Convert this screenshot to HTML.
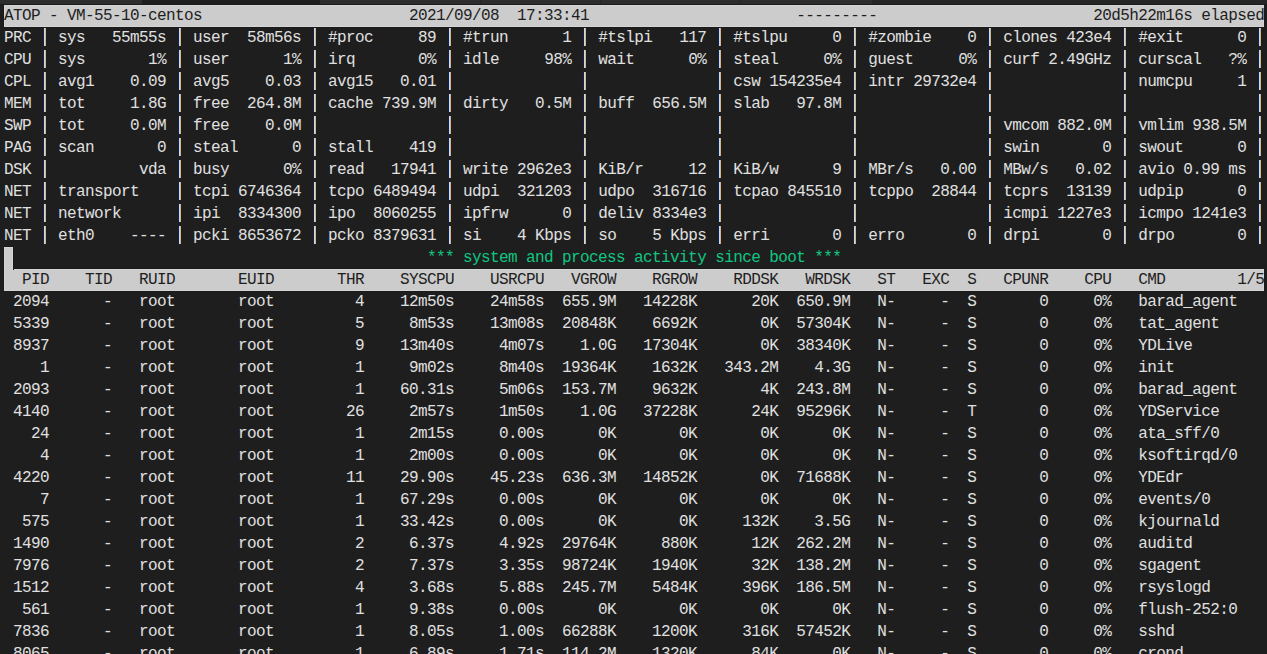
<!DOCTYPE html>
<html><head><meta charset="utf-8"><title>atop</title>
<style>
html,body{margin:0;padding:0;background:#1e1e1e;overflow:hidden;}
body{width:1267px;height:654px;position:relative;font-family:"Liberation Mono",monospace;}
.strip{position:absolute;left:0;top:0;width:1267px;height:4px;background:#2d2d2d;}
.strip i{position:absolute;top:0;height:4px;background:#1e1e1e;display:block;}
.strip i.s{background:#252526;}
.shadow{position:absolute;left:0;top:4px;width:1267px;height:1px;background:#1a1a1a;}
.term{position:absolute;left:4px;top:5px;width:1260px;color:#e0e0e0;font-size:16px;line-height:22px;letter-spacing:-0.6px;-webkit-text-stroke:0;}
.r{white-space:pre;height:22px;width:1260px;box-sizing:border-box;padding-top:1px;line-height:21px;}
.inv{background:#cccccc;color:#1e1e1e;-webkit-text-stroke:0;box-shadow:inset 0 1px 0 #d5d5d5,inset 0 -1px 0 #d5d5d5,inset 1px 0 0 #d5d5d5,inset -1px 0 0 #d5d5d5;position:relative;}
.inv::before{content:"";position:absolute;left:-1px;top:-1px;right:-1px;bottom:-1px;border:1px solid #1a1a1a;pointer-events:none;}
.g{color:#11c682;}
.cur{background:#cccccc;display:inline-block;width:9px;height:23px;vertical-align:top;margin-top:-1px;margin-bottom:-1px;position:relative;z-index:3;box-shadow:inset 1px 0 0 #d5d5d5,inset -1px 0 0 #d5d5d5,inset 0 1px 0 #d5d5d5,-1px 0 0 #1a1a1a,1px 0 0 #1a1a1a,0 -1px 0 #1a1a1a;}
.p{font-weight:normal;display:inline-block;width:9px;height:21px;vertical-align:top;position:relative;color:transparent;}
.p::after{content:"";position:absolute;left:3px;top:0;width:3px;height:18px;background:linear-gradient(to right,#1c1c52 0,#1c1c52 1px,#bbe1ea 1px,#bbe1ea 2px,#dab584 2px,#dab584 3px);}

</style></head><body>
<div class="strip"><i style="left:142px;width:178px"></i><i class="s" style="left:480px;width:1px"></i><i class="s" style="left:600px;width:1px"></i><i class="s" style="left:739px;width:1px"></i><i class="s" style="left:872px;width:395px"></i></div>
<div class="shadow"></div>
<div class="term">
<div class="r inv">ATOP - VM-55-10-centos                       2021/09/08  17:33:41                       ---------                        20d5h22m16s elapsed</div>
<div class="r">PRC <b class="p">|</b> sys   55m55s <b class="p">|</b> user  58m56s <b class="p">|</b> #proc     89 <b class="p">|</b> #trun      1 <b class="p">|</b> #tslpi   117 <b class="p">|</b> #tslpu     0 <b class="p">|</b> #zombie    0 <b class="p">|</b> clones 423e4 <b class="p">|</b> #exit      0 <b class="p">|</b></div>
<div class="r">CPU <b class="p">|</b> sys       1% <b class="p">|</b> user      1% <b class="p">|</b> irq       0% <b class="p">|</b> idle     98% <b class="p">|</b> wait      0% <b class="p">|</b> steal     0% <b class="p">|</b> guest     0% <b class="p">|</b> curf 2.49GHz <b class="p">|</b> curscal   ?% <b class="p">|</b></div>
<div class="r">CPL <b class="p">|</b> avg1    0.09 <b class="p">|</b> avg5    0.03 <b class="p">|</b> avg15   0.01 <b class="p">|</b>              <b class="p">|</b>              <b class="p">|</b> csw 154235e4 <b class="p">|</b> intr 29732e4 <b class="p">|</b>              <b class="p">|</b> numcpu     1 <b class="p">|</b></div>
<div class="r">MEM <b class="p">|</b> tot     1.8G <b class="p">|</b> free  264.8M <b class="p">|</b> cache 739.9M <b class="p">|</b> dirty   0.5M <b class="p">|</b> buff  656.5M <b class="p">|</b> slab   97.8M <b class="p">|</b>              <b class="p">|</b>              <b class="p">|</b>              <b class="p">|</b></div>
<div class="r">SWP <b class="p">|</b> tot     0.0M <b class="p">|</b> free    0.0M <b class="p">|</b>              <b class="p">|</b>              <b class="p">|</b>              <b class="p">|</b>              <b class="p">|</b>              <b class="p">|</b> vmcom 882.0M <b class="p">|</b> vmlim 938.5M <b class="p">|</b></div>
<div class="r">PAG <b class="p">|</b> scan       0 <b class="p">|</b> steal      0 <b class="p">|</b> stall    419 <b class="p">|</b>              <b class="p">|</b>              <b class="p">|</b>              <b class="p">|</b>              <b class="p">|</b> swin       0 <b class="p">|</b> swout      0 <b class="p">|</b></div>
<div class="r">DSK <b class="p">|</b>          vda <b class="p">|</b> busy      0% <b class="p">|</b> read   17941 <b class="p">|</b> write 2962e3 <b class="p">|</b> KiB/r     12 <b class="p">|</b> KiB/w      9 <b class="p">|</b> MBr/s   0.00 <b class="p">|</b> MBw/s   0.02 <b class="p">|</b> avio 0.99 ms <b class="p">|</b></div>
<div class="r">NET <b class="p">|</b> transport    <b class="p">|</b> tcpi 6746364 <b class="p">|</b> tcpo 6489494 <b class="p">|</b> udpi  321203 <b class="p">|</b> udpo  316716 <b class="p">|</b> tcpao 845510 <b class="p">|</b> tcppo  28844 <b class="p">|</b> tcprs  13139 <b class="p">|</b> udpip      0 <b class="p">|</b></div>
<div class="r">NET <b class="p">|</b> network      <b class="p">|</b> ipi  8334300 <b class="p">|</b> ipo  8060255 <b class="p">|</b> ipfrw      0 <b class="p">|</b> deliv 8334e3 <b class="p">|</b>              <b class="p">|</b>              <b class="p">|</b> icmpi 1227e3 <b class="p">|</b> icmpo 1241e3 <b class="p">|</b></div>
<div class="r">NET <b class="p">|</b> eth0    ---- <b class="p">|</b> pcki 8653672 <b class="p">|</b> pcko 8379631 <b class="p">|</b> si    4 Kbps <b class="p">|</b> so    5 Kbps <b class="p">|</b> erri       0 <b class="p">|</b> erro       0 <b class="p">|</b> drpi       0 <b class="p">|</b> drpo       0 <b class="p">|</b></div>
<div class="r"><span class="cur"> </span>                                              <span class="g">*** system and process activity since boot ***</span></div>
<div class="r inv">  PID    TID   RUID       EUID       THR    SYSCPU    USRCPU   VGROW    RGROW    RDDSK   WRDSK   ST   EXC  S   CPUNR    CPU   CMD        1/5</div>
<div class="r"> 2094      -   root       root         4    12m50s    24m58s  655.9M   14228K      20K  650.9M   N-     -  S       0     0%   barad_agent</div>
<div class="r"> 5339      -   root       root         5     8m53s    13m08s  20848K    6692K       0K  57304K   N-     -  S       0     0%   tat_agent</div>
<div class="r"> 8937      -   root       root         9    13m40s     4m07s    1.0G   17304K       0K  38340K   N-     -  S       0     0%   YDLive</div>
<div class="r">    1      -   root       root         1     9m02s     8m40s  19364K    1632K   343.2M    4.3G   N-     -  S       0     0%   init</div>
<div class="r"> 2093      -   root       root         1    60.31s     5m06s  153.7M    9632K       4K  243.8M   N-     -  S       0     0%   barad_agent</div>
<div class="r"> 4140      -   root       root        26     2m57s     1m50s    1.0G   37228K      24K  95296K   N-     -  T       0     0%   YDService</div>
<div class="r">   24      -   root       root         1     2m15s     0.00s      0K       0K       0K      0K   N-     -  S       0     0%   ata_sff/0</div>
<div class="r">    4      -   root       root         1     2m00s     0.00s      0K       0K       0K      0K   N-     -  S       0     0%   ksoftirqd/0</div>
<div class="r"> 4220      -   root       root        11    29.90s    45.23s  636.3M   14852K       0K  71688K   N-     -  S       0     0%   YDEdr</div>
<div class="r">    7      -   root       root         1    67.29s     0.00s      0K       0K       0K      0K   N-     -  S       0     0%   events/0</div>
<div class="r">  575      -   root       root         1    33.42s     0.00s      0K       0K     132K    3.5G   N-     -  S       0     0%   kjournald</div>
<div class="r"> 1490      -   root       root         2     6.37s     4.92s  29764K     880K      12K  262.2M   N-     -  S       0     0%   auditd</div>
<div class="r"> 7976      -   root       root         2     7.37s     3.35s  98724K    1940K      32K  138.2M   N-     -  S       0     0%   sgagent</div>
<div class="r"> 1512      -   root       root         4     3.68s     5.88s  245.7M    5484K     396K  186.5M   N-     -  S       0     0%   rsyslogd</div>
<div class="r">  561      -   root       root         1     9.38s     0.00s      0K       0K       0K      0K   N-     -  S       0     0%   flush-252:0</div>
<div class="r"> 7836      -   root       root         1     8.05s     1.00s  66288K    1200K     316K  57452K   N-     -  S       0     0%   sshd</div>
<div class="r"> 8065      -   root       root         1     6.89s     1.71s  114.2M    1320K      84K      0K   N-     -  S       0     0%   crond</div>
</div>
</body></html>
